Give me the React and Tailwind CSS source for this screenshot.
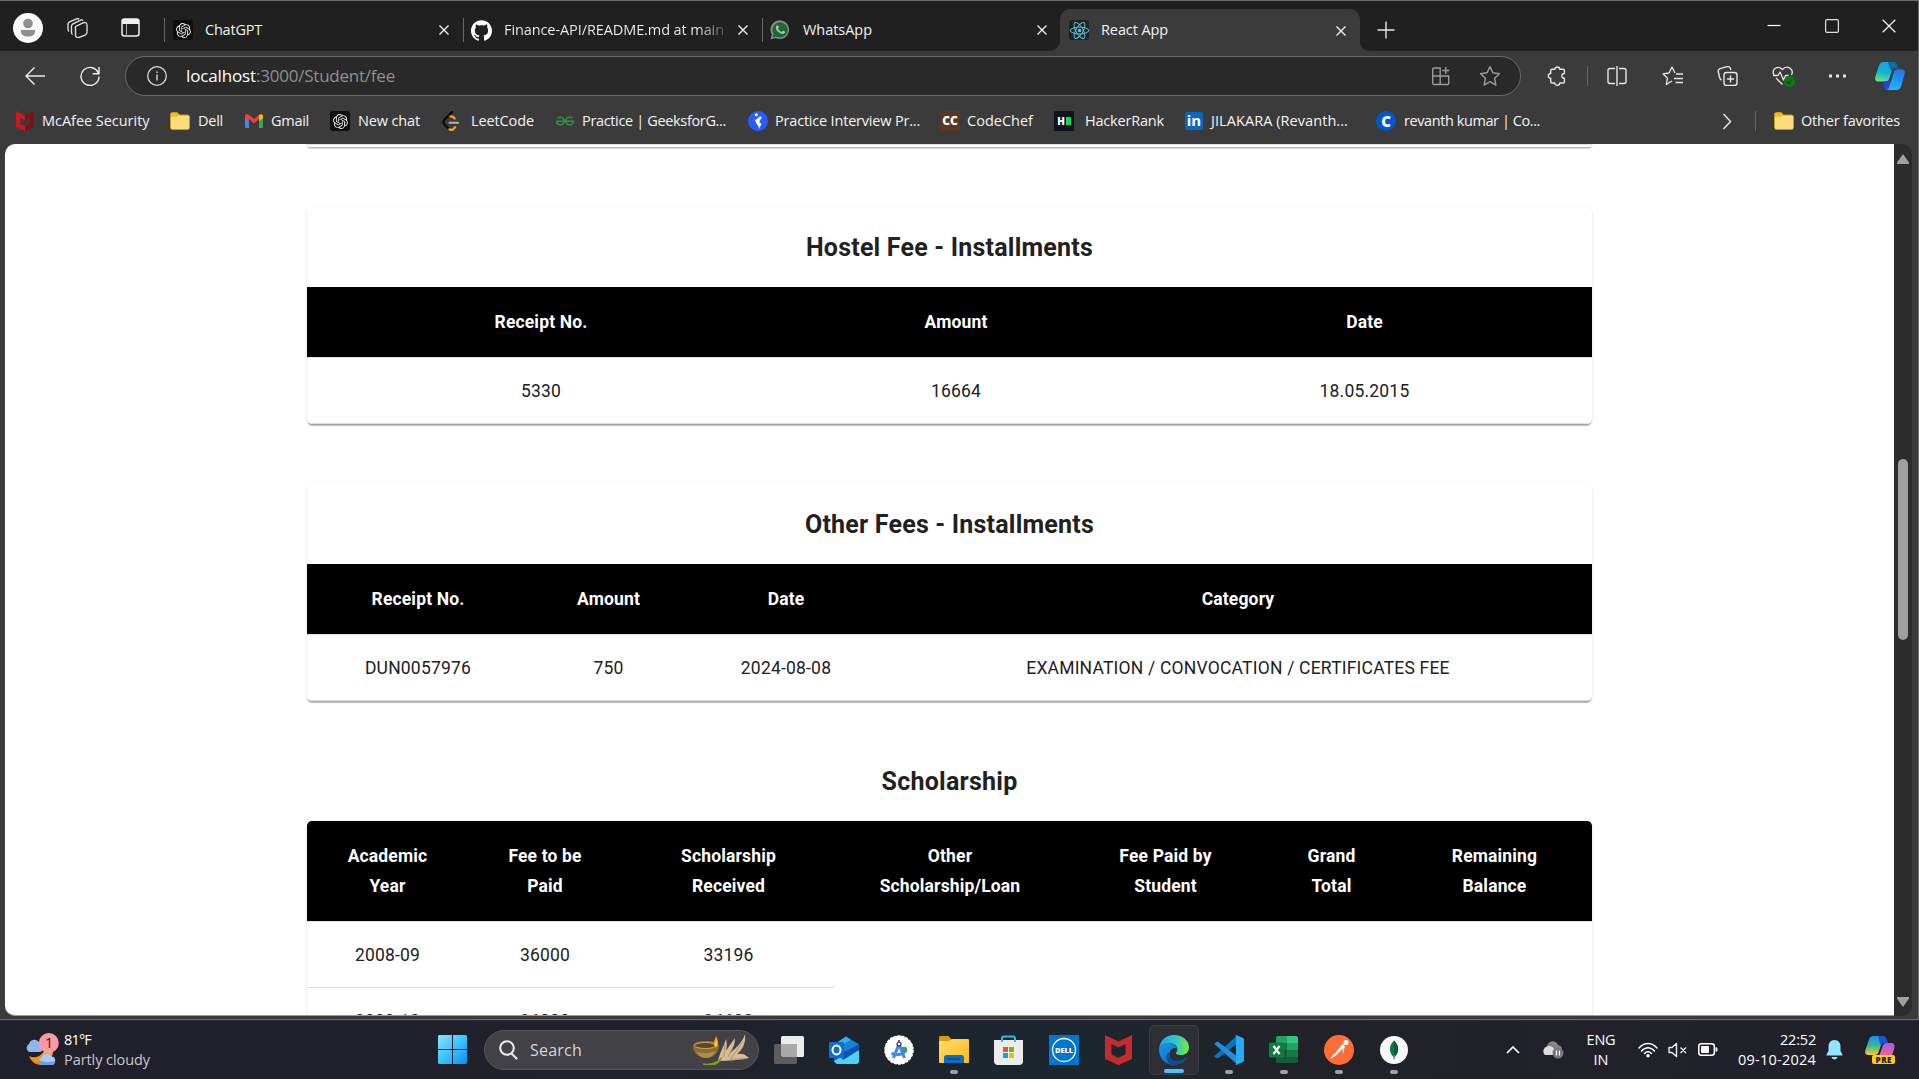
import { useLayoutEffect, useRef } from "react";
import { SiOpenai, SiGithub, SiGeeksforgeeks, SiReact } from "react-icons/si";

/* Text run whose tracking is adjusted so that it fills a nominal width. */
function Label({ w, className = "", children }) {
  const ref = useRef(null);
  useLayoutEffect(() => {
    const fit = () => {
      const el = ref.current;
      if (!el) return;
      el.style.letterSpacing = "0px";
      const natural = el.getBoundingClientRect().width;
      el.style.letterSpacing = `${(w - natural) / el.textContent.length}px`;
    };
    fit();
    document.fonts?.ready.then(fit);
  }, [w]);
  return (
    <span ref={ref} className={`inline-block shrink-0 whitespace-pre ${className}`}>
      {children}
    </span>
  );
}

function Svg({ w = 20, h = w, box = `0 0 ${w} ${h}`, className = "", children }) {
  return (
    <svg width={w} height={h} viewBox={box} fill="none" className={`block shrink-0 ${className}`}>
      {children}
    </svg>
  );
}

/* ---------- favicons ---------- */
const McAfeeSmall = () => (
  <Svg w={18} h={20}>
    <path d="M0 0v16l9 4v-4.600l-4.600-2.200V7L9 9.200V4.500z" fill="#c9181e" />
    <path d="M18 0L9 4.500V9.200L13.600 7v6.200L9 15.400V20l9-4z" fill="#7d1217" />
  </Svg>
);
const Folder = () => (
  <Svg w={20} h={20}>
    <path d="M.5 3.500a2 2 0 0 1 2-2h4.700l2 2.500h8.300a2 2 0 0 1 2 2v10.500a2 2 0 0 1-2 2h-15a2 2 0 0 1-2-2z" fill="#ffdc7a" stroke="#c99a15" />
    <path d="M1 3.500A1.500 1.500 0 0 1 2.500 2H7l1.500 2L7 5.800H1z" fill="#f3b91c" />
  </Svg>
);
const Gmail = () => (
  <Svg w={18} h={14}>
    <path d="M0 2v10.500A1.500 1.500 0 0 0 1.500 14H4V5z" fill="#4285f4" />
    <path d="M18 2v10.500a1.500 1.500 0 0 1-1.500 1.500H14V5z" fill="#34a853" />
    <path d="M0 2.200C0 .2 2-.5 3.500.5L9 5l5-4v4L9 9.500 4 5v2L0 4z" fill="#ea4335" />
    <path d="M14 1C16-.7 18 .3 18 2.200V4l-4 3z" fill="#fbbc04" />
  </Svg>
);
const OpenAi = () => (
  <div className="flex size-5 shrink-0 items-center justify-center rounded-[3px] bg-[#0d0d0d]">
    <SiOpenai size={15} color="#e8e8e8" />
  </div>
);
const Leet = () => (
  <Svg w={18} h={20}>
    <path d="M10 1L3 8c-2 2-2 4 0 6l4 4" stroke="#0a0a0a" strokeWidth="2.400" strokeLinecap="round" />
    <path d="M8.500 5.500c1-.4 1.800-.2 2.500.4l1.600 1.500M7.500 18.300c1.300.8 2.800.8 3.800-.1l1.800-2" stroke="#ffa116" strokeWidth="2.200" strokeLinecap="round" />
    <path d="M7.500 11.800h8.500" stroke="#b3b3b3" strokeWidth="2" strokeLinecap="round" />
  </Svg>
);
const Interview = () => (
  <Svg w={20}>
    <circle cx="10" cy="10" r="10" fill="#2a5bff" />
    <circle cx="8.300" cy="3.700" r="1.500" fill="#fff" />
    <path d="M7 9.200l5-3.700c1.500-.4 1.700.7 1.200 1.700l-2 3.500 2.300 2.300-2.700 5.200c.2-2.400-.5-3.700-2-5z" fill="#fff" />
  </Svg>
);
const ReactFav = () => (
  <div className="flex size-5 shrink-0 items-center justify-center rounded-[3px] bg-[#222]">
    <SiReact size={19} color="#61c9e6" />
  </div>
);
const WhatsApp = () => (
  <Svg w={20}>
    <path d="M.5 19.500l1.300-5A9.300 9.300 0 1 1 5.600 18z" fill="#8a8a8a" />
    <path d="M2.500 17.500l1-3.600a7.600 7.600 0 1 1 2.800 2.700z" fill="#176b2c" />
    <path d="M6.500 5.700c1-1 1.700-.4 2.300 1.400.2.700-.6 1.100-.7 1.600 1 1.800 2 2.600 3.500 3.200.6-.2 1-1.300 1.600-1.100 2 .8 2.300 1.100 1.500 2.300-2 2.700-9.500-1.500-8.900-6z" fill="#b9b9b9" />
  </Svg>
);

/* ---------- generic glyphs ---------- */
const Cross = ({ s = 10, sw = 1.4 }) => (
  <Svg w={s} box="0 0 10 10"><path d="M.5.5l9 9m0-9l-9 9" stroke="#f0f0f0" strokeWidth={sw} /></Svg>
);
const STAR = "M10 1.500l2.600 5.600 6 .8-4.400 4.200 1.100 6.100L10 15.200l-5.300 3 1.100-6.100L1.400 7.900l6-.8z";

const bookmarks = [
  [<McAfeeSmall />, "McAfee Security", 107.5, "w-[154px]", "w-[26px]"],
  [<Folder />, "Dell", 25, "w-[75px]", "w-[28px]"],
  [<Gmail />, "Gmail", 38, "w-[85px]", "w-[26px]"],
  [<OpenAi />, "New chat", 62, "w-[112px]", "w-[28px]"],
  [<Leet />, "LeetCode", 63, "w-[114px]", "w-[29px]"],
  [<SiGeeksforgeeks size={18} color="#2f8d46" />, "Practice | GeeksforG...", 144, "w-[192px]", "w-[26px]"],
  [<Interview />, "Practice Interview Pr...", 145, "w-[192px]", "w-[27px]"],
  [<div className="flex size-5 items-center justify-center bg-[#5b3620] text-[12px] leading-none font-extrabold text-white">CC</div>, "CodeChef", 66, "w-[114px]", "w-[27px]"],
  [<div className="flex size-5 items-center justify-center gap-px bg-[#0e141e] text-[10px] leading-none font-extrabold text-white">H<div className="h-2 w-[5px] bg-[#05e052]" /></div>, "HackerRank", 79, "w-[131px]", "w-[31px]"],
  [<div className="flex h-[18px] w-[18px] items-center justify-center rounded-[2px] bg-[#0a66c2] pb-[2px] text-[15px] leading-none font-bold text-white">in</div>, "JILAKARA (Revanth...", 137, "w-[191px]", "w-[26px]"],
  [<div className="flex size-5 items-center justify-center rounded-full bg-[#0056d2] text-[15px] leading-none font-extrabold text-white">C</div>, "revanth kumar | Co...", 136, "w-[170px]", "w-[28px]"],
];

function TabStrip() {
  return (
    <div className="flex h-[51px] border-t border-[#6b6b6b] bg-[#202020] text-[14.5px] text-[#f2f2f2]">
      <div className="mt-[3px] flex w-[164px] items-center pl-[13px]">
        <Svg w={30}>
          <circle cx="15" cy="15" r="15" fill="#fafafa" />
          <circle cx="15" cy="10.500" r="4.800" fill="#8f8f8f" />
          <path d="M8 17h14v1.500c0 3-2.500 5-7 5s-7-2-7-5z" fill="#8f8f8f" />
        </Svg>
        <Svg w={21} h={20} className="ml-[24px]">
          <g stroke="#e6e6e6" strokeWidth="1.300">
            <path d="M8.500 8.500l7.500-3.700c2-.8 4 0 4 2v7.500c0 1.200-.6 2-1.500 2.500l-5.500 2.400c-2.300 1-4.500 0-4.500-2z" />
            <path d="M5.500 16.500C4.700 16 4.500 15 4.500 14V8c0-1 .5-1.700 1.500-2.200l7.500-3.700c1-.4 2-.2 2.600.4" />
            <path d="M2 13.500c-.8-.6-1-1.400-1-2.500V6c0-1 .5-1.700 1.500-2.200L9.500.8c1-.4 2-.2 2.600.4" />
          </g>
        </Svg>
        <Svg w={19} h={19} className="ml-[33px]">
          <rect x="1" y="1" width="17" height="17" rx="2.500" stroke="#f0f0f0" strokeWidth="1.500" />
          <path d="M1 3a2 2 0 0 1 2-2h13a2 2 0 0 1 2 2v3H1z" fill="#f0f0f0" />
          <path d="M5.500 6v12" stroke="#aaa" />
        </Svg>
      </div>
      <div className="mt-[8px] flex w-[299px] items-center">
        <div className="h-6 w-px bg-[#666]" />
        <div className="ml-[8px]"><OpenAi /></div>
        <Label w={57} className="mb-px ml-[12px]">ChatGPT</Label>
        <div className="mr-[14px] ml-auto"><Cross /></div>
      </div>
      <div className="mt-[8px] flex w-[299px] items-center">
        <div className="h-6 w-px bg-[#666]" />
        <SiGithub size={21} className="ml-[7px] shrink-0 text-white" />
        <div className="mb-px ml-[12px] w-[220px] overflow-hidden bg-[linear-gradient(90deg,#f2f2f2_88%,#555_100%)] bg-clip-text text-transparent">
          <Label w={220}>Finance-API/README.md at main</Label>
        </div>
        <div className="mr-[14px] ml-auto"><Cross /></div>
      </div>
      <div className="mt-[8px] flex w-[286px] items-center">
        <div className="h-6 w-px bg-[#666]" />
        <div className="ml-[7px]"><WhatsApp /></div>
        <Label w={69} className="mb-px ml-[13px]">WhatsApp</Label>
        <div className="mr-[1px] ml-auto"><Cross /></div>
      </div>
      <div className="flex pt-[8px]">
        <div className="w-[12px] self-end bg-[#3b3b3b]"><div className="h-2.5 rounded-br-[10px] bg-[#202020]" /></div>
        <div className="flex w-[300px] items-center rounded-t-[10px] bg-[#3b3b3b] pl-[9px]">
          <ReactFav />
          <Label w={67} className="ml-[12px]">React App</Label>
          <div className="mr-[14px] ml-auto pt-px"><Cross /></div>
        </div>
        <div className="w-[9px] self-end bg-[#3b3b3b]"><div className="h-2.5 rounded-bl-[10px] bg-[#202020]" /></div>
      </div>
      <div className="ml-[8px] flex items-center pt-[7px]">
        <Svg w={18}><path d="M9 .5v17M.5 9h17" stroke="#e6e6e6" strokeWidth="1.400" /></Svg>
      </div>
      <div className="ml-auto flex items-center gap-[43.500px] pr-[22px]">
        <Svg w={14}><path d="M.5 6.500h13" stroke="#fff" strokeWidth="1.200" /></Svg>
        <Svg w={14}><rect x=".6" y=".6" width="12.800" height="12.800" rx="1.500" stroke="#e0e0e0" strokeWidth="1.200" /></Svg>
        <Cross s={14} sw={0.9} />
      </div>
    </div>
  );
}

function Toolbar() {
  return (
    <div className="flex h-[50px] items-center bg-[#3b3b3b]">
      <Svg w={20} className="ml-[25px]"><path d="M20 10H1.500M9.500 1.500L1 10l8.500 8.500" stroke="#eee" strokeWidth="1.400" /></Svg>
      <Svg w={20} className="ml-[35px]"><path d="M18.500 7.500A9 9 0 1 0 19 10.500M19 1v6.700h-6.300" stroke="#eee" strokeWidth="1.400" /></Svg>
      <div className="ml-[25px] flex h-10 w-[1396px] items-center rounded-full border border-[#6a6a6a] bg-[#292929] text-[17px]">
        <Svg w={20} className="ml-[21px]">
          <circle cx="10" cy="10" r="9.300" stroke="#d8d8d8" strokeWidth="1.300" />
          <path d="M10 8.500v6M10 5.500v1.500" stroke="#d8d8d8" strokeWidth="1.400" />
        </Svg>
        <Label w={70} className="mb-px ml-[19px] text-white">localhost</Label>
        <Label w={139} className="mb-px text-[#8f8f8f]">:3000/Student/fee</Label>
        <Svg w={20} className="ml-auto">
          <path d="M1.700 10V3.200c0-.8.500-1.200 1.200-1.200h6.300v16.500H2.900c-.8 0-1.200-.5-1.200-1.200zh16v7.300c0 .7-.5 1.200-1.200 1.200H9.200M14.800 1v7M11.300 4.500h7" stroke="#9a9a9a" strokeWidth="1.400" />
        </Svg>
        <Svg w={22} box="0 0 20 20" className="mr-[19px] ml-[28px]"><path d={STAR} stroke="#9a9a9a" strokeWidth="1.300" strokeLinejoin="round" /></Svg>
      </div>
      <Svg w={20} className="ml-[26px]">
        <path d="M5 3.200h2.800c0-3 4.900-3 4.900 0h3.400c.8 0 1.300.5 1.300 1.300v3c-3.500-.3-3.500 5 0 4.800v3.400c0 .8-.5 1.300-1.300 1.300h-3.400c0 3-4.900 3-4.900 0H5c-.8 0-1.300-.5-1.300-1.300v-3.400c-3.200 0-3.200-4.800 0-4.800v-3c0-.8.5-1.300 1.300-1.300z" stroke="#e6e6e6" strokeWidth="1.400" strokeLinejoin="round" />
      </Svg>
      <div className="ml-[20px] h-5 w-px bg-[#666]" />
      <Svg w={20} className="ml-[19px]">
        <path d="M8 2.500H3C1.500 2.500 1 3.300 1 4.500v11c0 1.200.8 2 2 2h5M12 2.500h5c1.200 0 2 .8 2 2v11c0 1.200-.8 2-2 2h-5M10 0v20" stroke="#e6e6e6" strokeWidth="1.400" />
      </Svg>
      <Svg w={22} h={20} className="ml-[35px]">
        <path d="M13 7L10 1 7 7l-6 .8 4.500 4.500L4.300 18.500 10 15M14 8h7M12 12.500h9M13.500 16.500H21" stroke="#e6e6e6" strokeWidth="1.300" strokeLinejoin="round" />
      </Svg>
      <Svg w={22} h={20} className="ml-[33px]">
        <rect x="7" y="6.500" width="13" height="13" rx="2.500" stroke="#e6e6e6" strokeWidth="1.400" />
        <path d="M13.500 9.500v7M10 13h7M4.500 14c-1-.4-1.500-1.200-1.800-2.300L1.200 5.500C1 4 1.600 3.200 3 2.700l7-2c1.500-.4 2.800.2 3.400 1.800l.5 1.500" stroke="#e6e6e6" strokeWidth="1.400" />
      </Svg>
      <Svg w={24} h={21} className="ml-[33px]">
        <path d="M2 9C-1 3.500 5.500-1.500 10.500 3.500 15-1.500 22.500 3 19.500 9M4 12l6.500 6.500M1 9.500h5l2-3.500 3.500 8 2-4.500h3" stroke="#e6e6e6" strokeWidth="1.300" strokeLinejoin="round" />
        <circle cx="17.500" cy="15.500" r="5.500" fill="#0f7a12" />
        <path d="M15 15.500l2 2 3-4" stroke="#063f08" strokeWidth="1.200" />
      </Svg>
      <Svg w={18} h={4} className="ml-[33px]"><path d="M0 .5h3v3H0zM7 .5h3v3H7zM14 .5h3v3h-3z" fill="#e6e6e6" /></Svg>
      <Svg w={30} h={28} className="ml-[28px]">
        <path d="M4 3.500C4.800 1.200 6 0 8.500 0H20l-5.500 16c-.8 2.500-2 3.500-4.500 3.500H3.500C.5 19.500-.3 17.500.3 15z" fill="url(#cpA)" />
        <path d="M13 0h6c2 0 2.800 1 3.200 3l.8 3.500h-3c-1.800 0-2.800.8-3.500 2.500L15 7z" fill="#0a6aa5" />
        <path d="M8 19.500h3c2 0 3-1 3.600-2.500L16 21l-3 7c-2.500 0-3.500-1-4-3z" fill="#1e45d8" />
        <path d="M26 24.500c-.8 2.300-2 3.500-4.500 3.500H11c1.500 0 2.500-1 3-2.500L18.500 11c.8-2.500 2-3.700 4.500-3.700h3.500c3 0 3.800 2 3.200 4.500z" fill="url(#cpB)" />
        <path d="M14.300 17.500L17.500 8.500h1.700L16.200 18l-1 3z" fill="#3b3b3b" />
        <defs>
          <linearGradient id="cpA" x1="10" y1="0" x2="6" y2="20" gradientUnits="userSpaceOnUse"><stop stopColor="#18a4e0" /><stop offset=".5" stopColor="#13b2cf" /><stop offset="1" stopColor="#6be58b" /></linearGradient>
          <linearGradient id="cpB" x1="25" y1="6" x2="18" y2="28" gradientUnits="userSpaceOnUse"><stop stopColor="#2b6fe0" /><stop offset=".6" stopColor="#1d98ff" /><stop offset="1" stopColor="#25b8ff" /></linearGradient>
        </defs>
      </Svg>
    </div>
  );
}

function Bookmarks() {
  return (
    <div className="flex h-[43px] items-center bg-[#3b3b3b] pb-[3px] pl-[16px] text-[14.5px] text-[#f4f4f4]">
      {bookmarks.map(([icon, text, w, cell, slot]) => (
        <div key={text} className={`flex h-full shrink-0 items-center ${cell}`}>
          <div className={`shrink-0 ${slot}`}>{icon}</div>
          <Label w={w} className="mb-px">{text}</Label>
        </div>
      ))}
      <Svg w={10} h={17} className="ml-auto"><path d="M1.500 1l7 7.500-7 7.500" stroke="#e6e6e6" strokeWidth="1.500" /></Svg>
      <div className="ml-[23px] h-5 w-px bg-[#666]" />
      <div className="mr-[7px] ml-[18px]"><Folder /></div>
      <Label w={99} className="mr-[18px] mb-px">Other favorites</Label>
    </div>
  );
}

/* ---------- fee tables ---------- */
const SHADOW = "shadow-[0_2.5px_1px_-1px_rgba(0,0,0,.2),0_1px_1px_0_rgba(0,0,0,.14),0_1px_3px_0_rgba(0,0,0,.12)]";

function FeeTable({ cols, head, rows, tall }) {
  return (
    <table className="w-[1285px] table-fixed border-separate border-spacing-0 text-center text-[17.5px] text-[#212121]">
      <colgroup>{cols.map((w, i) => <col key={i} style={{ width: w }} />)}</colgroup>
      <thead>
        <tr className={tall ? "h-[101px]" : "h-[71px]"}>
          {head.map((h) => (
            <th key={h} className="border-b border-[#e0e0e0] bg-black bg-clip-padding p-0 leading-[30px] font-bold tracking-[0.15px] whitespace-pre-line text-white">{h}</th>
          ))}
        </tr>
      </thead>
      <tbody>
        {rows.map((r, i) => (
          <tr key={i} className="h-[66px]">
            {r.map((c, j) => (
              <td key={j} className="border-b border-[#e0e0e0] p-0 pt-[2px] leading-[25px] tracking-[0.2px]">{c}</td>
            ))}
          </tr>
        ))}
      </tbody>
    </table>
  );
}

function FeeCard({ title, w, ...table }) {
  return (
    <section className={`w-[1285px] shrink-0 overflow-hidden rounded-[5px] bg-white ${SHADOW}`}>
      <h2 className="flex h-[80px] items-center justify-center pt-[2px] text-[25px] font-bold text-[#212121]"><Label w={w}>{title}</Label></h2>
      <FeeTable {...table} />
    </section>
  );
}

function Page() {
  return (
    <div className="flex h-[872px] bg-[#3b3b3b] pl-[5px]">
      <main className="flex w-[1889px] shrink-0 flex-col items-center overflow-hidden rounded-l-[10px] border-b border-[#9a9a9a] bg-white font-[Roboto,sans-serif]">
        <div className={`h-[3px] w-[1285px] shrink-0 rounded-b-[5px] border-t border-[#e0e0e0] bg-white ${SHADOW}`} />
        <div className="h-[60px] shrink-0" />
        <FeeCard title="Hostel Fee - Installments" w={287} cols={[468, 362, 455]} head={["Receipt No.", "Amount", "Date"]} rows={[["5330", "16664", "18.05.2015"]]} />
        <div className="h-[60px] shrink-0" />
        <FeeCard title="Other Fees - Installments" w={289} cols={[222, 159, 196, 708]} head={["Receipt No.", "Amount", "Date", "Category"]} rows={[["DUN0057976", "750", "2024-08-08", "EXAMINATION / CONVOCATION / CERTIFICATES FEE"]]} />
        <h2 className="mt-[60px] mb-[20px] flex h-[40px] shrink-0 items-center pt-[2px] text-[25px] font-bold text-[#212121]"><Label w={136}>Scholarship</Label></h2>
        <section className={`w-[1285px] shrink-0 overflow-hidden rounded-[5px] bg-white ${SHADOW}`}>
          <FeeTable
            tall
            cols={[161, 154, 213, 230, 201, 131, 195]}
            head={["Academic\nYear", "Fee to be\nPaid", "Scholarship\nReceived", "Other\nScholarship/Loan", "Fee Paid by\nStudent", "Grand\nTotal", "Remaining\nBalance"]}
            rows={[["2008-09", "36000", "33196"], ["2009-10", "36000", "34600"]]}
          />
        </section>
      </main>
      <aside className="flex w-[18px] shrink-0 flex-col items-center rounded-r-[10px] bg-[#2c2c2c]">
        <Svg w={12} h={10} className="mt-[10px]"><path d="M6 0l6 8.500V10H0V8.500z" fill="#a0a0a0" /></Svg>
        <div className="mt-[295px] h-[181px] w-[10px] rounded-full bg-[#9f9f9f]" />
        <Svg w={12} h={10} className="mt-auto mb-[9px]"><path d="M6 10L0 1.500V0h12v1.500z" fill="#a0a0a0" /></Svg>
      </aside>
    </div>
  );
}

/* ---------- taskbar ---------- */
const Weather = () => (
  <Svg w={34} h={34} className="ml-[25px]">
    <path d="M4 23c5 3 13 1 16-7l8-3c1 12-4 19-12 19-6 0-10-4-12-9z" fill="url(#moon)" />
    <path d="M4 19a4.500 4.500 0 0 1 0-8C5 6 12 5 14.500 10c3 0 4.500 3 3.500 5.500 0 2-1.500 3.500-3.500 3.500z" fill="#8fb5ee" />
    <path d="M17 32c-4-1-4-6-.5-7 1-5 8-6 10-1.500 3 0 4.500 3 3.500 5.500-.4 2-1.500 3-3.500 3z" fill="#a9c9f8" />
    <path d="M14 27c5 3 12 2 16 1-.3 2.500-1.500 4-3.500 4H17c-2 0-3.500-2-3-5z" fill="#759cdb" />
    <circle cx="23.800" cy="10" r="10" fill="#ff99a4" />
    <text x="24" y="15" textAnchor="middle" fontSize="14" fill="#222" fontFamily="Open Sans">1</text>
    <defs><linearGradient id="moon" x1="0" y1="0" x2="0" y2="1"><stop stopColor="#ffc928" /><stop offset="1" stopColor="#e97d10" /></linearGradient></defs>
  </Svg>
);
const Windows = () => (
  <Svg w={29}>
    <defs><linearGradient id="win" x1="0" y1="0" x2="29" y2="29" gradientUnits="userSpaceOnUse"><stop stopColor="#8be2ff" /><stop offset=".5" stopColor="#3cc4fb" /><stop offset="1" stopColor="#0a8df5" /></linearGradient></defs>
    <path d="M1 0h13v14H0V1zM15 0h13l1 1v13H15zM0 15h14v14H1l-1-1zM15 15h14v13l-1 1H15z" fill="url(#win)" />
  </Svg>
);
const Diya = () => (
  <Svg w={58} h={30}>
    <path d="M0 11c0-4 6-5 13-5s13 1 13 5c0 6-5 12-13 12S0 17 0 11z" fill="#8a6d35" />
    <path d="M3 16c5 3 15 3 20-1-2 5-5 8-10 8S5 20 3 16z" fill="#b08c45" />
    <ellipse cx="12.500" cy="10.500" rx="11" ry="3" fill="#5c4825" stroke="#c9aa68" />
    <path d="M23 1c2 4 3 8 1 11-3 0-4-2-3-5z" fill="#ff9d0a" /><path d="M23 5c1 3 1 5 0 7-2-1-1-3 0-7z" fill="#ffe066" />
    <path d="M25 26c2-9 6-15 8-22 1 5 1 8 0 12 3-5 6-9 9-13 0 6-2 11-5 15 7-6 12-10 15-19 1 9-2 15-8 20 5-1 8 0 12 4-10 2-20 3-31 3z" fill="#d8bb98" />
    <path d="M31 22l1-12M35 22l6-12M38 23l12-16M37 24l14 0" stroke="#a88562" strokeWidth=".8" />
    <path d="M10 29c8 1 15-2 19-7-2 5-5 8-11 8z" fill="#8b9a18" stroke="#8b9a18" />
  </Svg>
);
const TaskView = () => (
  <Svg w={30} h={28}>
    <rect x="7" width="23" height="21" rx="1.500" fill="#ebebeb" />
    <rect y="8" width="23" height="20" rx="1.500" fill="#5d5d5d" /><path d="M7 8h16v13H8.500L7 19.500z" fill="#a9a9a9" />
  </Svg>
);
const Outlook = () => (
  <Svg w={30} h={28}>
    <path d="M5 8L17 .5 30 8v17a3 3 0 0 1-3 3H8a3 3 0 0 1-3-3z" fill="#0a63c4" />
    <path d="M9 6l8-5.500L22 4 9 12z" fill="#35b0ec" /><path d="M12 11l10-7 7 4-14 10z" fill="#1682d8" />
    <path d="M30 10v15a3 3 0 0 1-3 3H8l-3-3z" fill="#4bd3fb" /><path d="M30 9v5L14 24l-4-6z" fill="#0c52ae" />
    <rect y="6" width="15" height="16" rx="1" fill="#0b6fcf" />
    <ellipse cx="7.500" cy="14" rx="4" ry="4.500" stroke="#fff" strokeWidth="2" />
  </Svg>
);
const Studio = () => (
  <Svg w={30}>
    <circle cx="15" cy="15" r="14" fill="#fff" stroke="#fff" strokeWidth="1.500" strokeDasharray="3 1" />
    <circle cx="20" cy="15" r="3.200" fill="#2aa55a" />
    <path d="M15 9L9.500 23M15 9l5.500 14M7.500 18.500c4 1.500 9 1.500 13-1" stroke="#4285f4" strokeWidth="3" />
    <circle cx="15" cy="9" r="2" fill="#fff" stroke="#333" strokeWidth="1.200" /><path d="M15 5v2.500" stroke="#333" strokeWidth="1.500" />
  </Svg>
);
const Explorer = () => (
  <Svg w={30} h={27}>
    <path d="M0 1.500C0 .5.500 0 1.500 0h8l3 3.500H28V10H0z" fill="#dd9a09" />
    <path d="M0 5h10l3-2h15.500c1 0 1.500.5 1.500 1.500V26c0 .7-.4 1-1 1H1c-.6 0-1-.4-1-1z" fill="url(#expl)" />
    <path d="M5 27v-5.500A2.500 2.500 0 0 1 7.500 19h15a2.500 2.500 0 0 1 2.500 2.500V27z" fill="#0f6cc4" /><path d="M8.500 23h13" stroke="#084b91" strokeWidth="1.500" />
    <defs><linearGradient id="expl" x1="0" y1="0" x2="1" y2="1"><stop stopColor="#ffdb6e" /><stop offset="1" stopColor="#fbbd16" /></linearGradient></defs>
  </Svg>
);
const Store = () => (
  <Svg w={29} h={30}>
    <path d="M8 7V3.500C8 2 8.500 1.500 10 1.500h9c1.500 0 2 .5 2 2V7" stroke="#25bdf4" strokeWidth="2" />
    <path d="M0 5h29v21a4 4 0 0 1-4 4H4a4 4 0 0 1-4-4z" fill="#ececec" /><path d="M7 6h2M20 6h2" stroke="#25bdf4" strokeWidth="2" />
    <path d="M9 12h5v5H9z" fill="#f25022" /><path d="M15 12h5v5h-5z" fill="#7fba00" /><path d="M9 18h5v5H9z" fill="#00a4ef" /><path d="M15 18h5v5h-5z" fill="#ffb900" />
  </Svg>
);
const Dell = () => (
  <Svg w={30}>
    <path d="M0 0h30v30H0z" fill="#0076ce" /><circle cx="15" cy="15" r="11.500" stroke="#fff" strokeWidth="1.300" />
    <text x="15" y="17.800" textAnchor="middle" fontSize="7.500" fontWeight="800" fill="#fff" fontFamily="Open Sans" textLength="18">DELL</text>
  </Svg>
);
const McAfee = () => (
  <Svg w={27} h={30}>
    <path d="M0 0l13.500 6.500L27 0v24l-13.500 6L0 24zM6.500 9v10.500l7 3.300 7-3.300V9l-7 3.500z" fill="#c52a2e" fillRule="evenodd" />
  </Svg>
);
const Edge = () => (
  <Svg w={30}>
    <defs>
      <linearGradient id="edT" x1="1" y1="8" x2="29" y2="12" gradientUnits="userSpaceOnUse"><stop stopColor="#2a9fe4" /><stop offset=".5" stopColor="#2ec4d0" /><stop offset="1" stopColor="#73e84a" /></linearGradient>
      <linearGradient id="edB" x1="4" y1="10" x2="20" y2="30" gradientUnits="userSpaceOnUse"><stop stopColor="#1595e5" /><stop offset="1" stopColor="#0a60c0" /></linearGradient>
    </defs>
    <path d="M0 14C1 5 7 0 15 0c9 0 15 6 15 12.500 0 5-4 7.500-8 7.500-4 0-6-1.300-4.500-3 1.500-2 1.500-6-3-8C9 7 2 9 0 14z" fill="url(#edT)" />
    <path d="M0 14C1.500 9.500 6 7.500 10.500 8c4.500.5 7.500 3 7.800 6-3-2.500-7.800 0-7.800 5.500 0 5 4 9 9 9.500-3 1.300-7 1.200-10 0C3.500 27 0 21 0 14z" fill="url(#edB)" />
    <path d="M10 17c-1 6 4.500 10 10.500 8.500 3-.7 5-2 6.500-3 1 .2.700 1 .2 1.700-3 4-7.700 6-13.200 5.800C8 29 5 22 10 17z" fill="#114c98" />
  </Svg>
);
const Code = () => (
  <Svg w={30}>
    <path d="M1 20.500L22 1.500v8L4.500 23c-.7.500-1.500.4-2 0L.8 21.700c-.4-.4-.3-.9.200-1.200z" fill="#0a75c0" />
    <path d="M1 9.500L22 28.500v-8L4.500 7c-.7-.5-1.500-.4-2 0L.8 8.300c-.4.400-.3.900.2 1.200z" fill="#1b8fdd" />
    <path d="M20.500.6L22 0l7 3c.6.3 1 1 1 1.600v20.800c0 .7-.4 1.300-1 1.600l-7 3-1.500-.6c.8.300 1.500-.3 1.500-1V1.600c0-.7-.7-1.300-1.500-1z" fill="#2aa9f5" />
  </Svg>
);
const Excel = () => (
  <Svg w={29} h={27}>
    <rect x="7" width="22" height="27" rx="1.500" fill="#185c37" />
    <path d="M8.500 0H18v7H7V1.500z" fill="#21a366" /><path d="M18 0h9.500L29 1.500V7H18z" fill="#33c481" />
    <path d="M7 7h11v7H7z" fill="#107c41" /><path d="M18 7h11v7H18z" fill="#21a366" /><path d="M18 14h11v7H18z" fill="#107c41" />
    <rect y="6.500" width="15" height="15" rx="1.200" fill="#107c41" /><path d="M4.500 9.800l6 8.400m0-8.400l-6 8.400" stroke="#fff" strokeWidth="2.200" />
  </Svg>
);
const Postman = () => (
  <Svg w={30}>
    <circle cx="15" cy="15" r="15" fill="#ff6c37" /><circle cx="22" cy="7.500" r="2.600" fill="#fff" />
    <path d="M18.500 9l2.500 2.500-6.500 6.500-4 1z" fill="#fff" /><path d="M11 18.500l-4 5M13.500 18.500l-5.500 4M20 12l-1 6" stroke="#fff" strokeWidth="1.100" />
  </Svg>
);
const Mongo = () => (
  <Svg w={28}>
    <circle cx="14" cy="14" r="14" fill="#f7f7f7" /><path d="M14 4.500c6 6 5 12.500 0 17-5-4.500-6-11 0-17z" fill="#10744f" />
    <path d="M14 4.500c6 6 5 12.500 0 17z" fill="#0a5a3c" /><path d="M14 19v4.500" stroke="#6b8f80" strokeWidth="1.200" />
  </Svg>
);

const apps = [
  [<TaskView />], [<Outlook />], [<Studio />], [<Explorer />, 1], [<Store />], [<Dell />], [<McAfee />],
  [<Edge />, 2], [<Code />, 1], [<Excel />, 1], [<Postman />, 1], [<Mongo />, 1],
];

function Taskbar() {
  return (
    <div className="flex h-[59px] items-center border-t border-[#2a2a30] bg-[linear-gradient(90deg,#20202a_0%,#20212a_35%,#1c262e_53%,#1e252d_60%,#212228_68%,#20202a_100%)] pb-px text-white">
      <Weather />
      <div className="ml-[5px] flex w-[120px] flex-col items-start text-[14.5px] leading-[20px]">
        <Label w={27}>81°F</Label>
        <Label w={86} className="text-[#c9c9cc]">Partly cloudy</Label>
      </div>
      <div className="ml-[254px]"><Windows /></div>
      <div className="ml-[17px] flex h-10 w-[275px] items-center rounded-full border border-[#55555a] bg-[#414146] pr-[7px]">
        <Svg w={19} h={20} className="ml-[14px]"><circle cx="8" cy="8" r="6.800" stroke="#eee" strokeWidth="2" /><path d="M12.500 13.500l5 5" stroke="#ddd" strokeWidth="2.400" strokeLinecap="round" /></Svg>
        <Label w={52} className="ml-[12px] pt-px text-[16px] text-[#d5d5d8]">Search</Label>
        <div className="ml-auto"><Diya /></div>
      </div>
      <div className="ml-[2px] flex">
        {apps.map(([icon, state], i) => (
          <div key={i} className="flex h-[52px] w-[55px] items-center justify-center">
            <div className={`relative flex size-[50px] items-center justify-center rounded-[5px] ${state === 2 ? "border border-[#3a3a40] bg-[#2e2e35]" : ""}`}>
              {icon}
              {state && <div className={`absolute bottom-[1px] h-1 rounded-full ${state === 2 ? "w-5 bg-[#4cc2ff]" : "w-2 bg-[#a0a0a3]"}`} />}
            </div>
          </div>
        ))}
      </div>
      <Svg w={14} h={8} className="ml-[85px]"><path d="M1 7l6-6 6 6" stroke="#fff" strokeWidth="1.700" /></Svg>
      <Svg w={21} h={18} className="ml-[23px]">
        <path d="M4 5C6-1 13-1 15 4c3 0 4.500 3 4 6l-8 3z" fill="#858588" /><path d="M1 13c-2-4 1-8 5-8 2 0 4 1 5 3l4 2-5 4H3c-1 0-1.500-.3-2-1z" fill="#dcdcdc" />
        <circle cx="15" cy="12" r="5.500" fill="#77777b" /><path d="M13.500 9.500v5M16.500 9.500v5" stroke="#fff" strokeWidth="1.200" />
      </Svg>
      <div className="ml-[22px] flex w-[30px] flex-col items-center text-[14.5px] leading-[20px]"><Label w={29}>ENG</Label><Label w={15}>IN</Label></div>
      <Svg w={20} h={16} className="ml-[22px]"><path d="M1 6c5-6 13-6 18 0M3.500 9c4-4.500 9-4.500 13 0M6.500 11.500c2-2.300 5-2.300 7 0" stroke="#fff" strokeWidth="1.500" strokeLinecap="round" /><circle cx="10" cy="13.700" r="1.700" fill="#fff" /></Svg>
      <Svg w={20} h={16} className="ml-[10px]"><path d="M1 5.500v5h3l4.500 4V1.500l-4.500 4zM12.500 5.500l5.500 5.500m0-5.500L12.500 11" stroke="#f0f0f0" strokeWidth="1.400" strokeLinejoin="round" /></Svg>
      <Svg w={20} h={13} className="ml-[10px]"><rect x=".8" y=".8" width="15.500" height="11.400" rx="2.500" stroke="#fff" strokeWidth="1.500" /><rect x="3" y="3" width="8" height="7" rx="1" fill="#fff" /><path d="M18 4.500c1.500 0 1.500 4 0 4z" fill="#fff" stroke="#fff" /></Svg>
      <div className="ml-[20px] flex w-[78px] flex-col items-end text-[14.5px] leading-[20px]"><Label w={36}>22:52</Label><Label w={78}>09-10-2024</Label></div>
      <Svg w={17} h={20} className="ml-[10px]"><path d="M8.500 0c4 0 6 3 6 6.500V11l2 3.500v1H.5v-1l2-3.500V6.500C2.500 3 4.500 0 8.500 0zM5.500 17h6c-.5 3.200-5.500 3.200-6 0z" fill="#92e4ff" /></Svg>
      <Svg w={30} h={28} className="mr-[24px] ml-auto">
        <defs>
          <linearGradient id="pcA" x1="0" y1="0" x2="0" y2="1"><stop stopColor="#1a90f0" /><stop offset=".5" stopColor="#34b6a0" /><stop offset="1" stopColor="#ffc91e" /></linearGradient>
          <linearGradient id="pcB" x1="0" y1="0" x2="0" y2="1"><stop stopColor="#9b5cf5" /><stop offset="1" stopColor="#f4608c" /></linearGradient>
        </defs>
        <path d="M4 3.500C4.800 1.200 6 0 8.500 0H19l-5 15c-.8 2.500-2 4-4.500 4H3.500C.5 19-.3 17 .3 14.500z" fill="url(#pcA)" />
        <path d="M13 0h5c2 0 3 1 3.500 3L23 7h-3c-2 0-3 1-3.500 2.500L15 8z" fill="#1c54d6" />
        <path d="M17.500 10.500c.7-2.500 2-3.500 4.500-3.500h4c3 0 4 2 3.300 5l-2 7H14.500z" fill="url(#pcB)" />
        <rect x="7" y="19" width="23" height="9" rx="2" fill="#ffcb14" />
        <text x="18.500" y="26.500" textAnchor="middle" fontSize="8" fontWeight="800" fill="#222" fontFamily="Open Sans" textLength="16">PRE</text>
      </Svg>
    </div>
  );
}

export default function App() {
  return (
    <div className="flex h-[1079px] w-[1919px] flex-col overflow-hidden bg-[#20202a] font-['Open_Sans',sans-serif]">
      <div className="flex h-[1020px] shrink-0 flex-col border-r border-b border-[#6b6b6b] bg-[#3b3b3b]">
        <TabStrip />
        <Toolbar />
        <Bookmarks />
        <Page />
      </div>
      <Taskbar />
    </div>
  );
}
